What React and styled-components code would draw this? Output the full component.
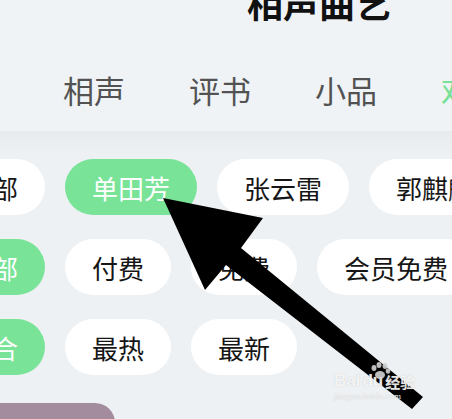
import React from "react";
import styled, { createGlobalStyle } from "styled-components";

const GlobalStyle = createGlobalStyle`
	html, body {
		margin: 0;
		padding: 0;
		background: #eef1f4;
		overflow: hidden;
	}
	body {
		font-family: "Noto Sans CJK SC", "Noto Sans", sans-serif;
	}
`;

const Page = styled.div`
	position: relative;
	width: 452px;
	height: 419px;
	overflow: hidden;
`;

const Header = styled.div`
	background: #f0f3f6;
	padding-left: 247px;
	margin-top: -24px;
	height: 46px;
`;

const Title = styled.h1`
	margin: 0;
	font-size: 36px;
	font-weight: 700;
	line-height: 52px;
	color: #111;
	white-space: nowrap;
`;

const TabBar = styled.div`
	display: flex;
	gap: 64px;
	padding: 48px 0 0 63px;
	height: 109px;
	align-items: flex-start;
	background: #f0f3f6;
	white-space: nowrap;
	box-sizing: border-box;
`;

const Tab = styled.div`
	font-size: 31px;
	line-height: 40px;
	color: ${(p) => (p.$active ? "#77e196" : "#525252")};
	flex: none;
`;

const ChipArea = styled.div`
	background: linear-gradient(#e8ebee 0px, #eef1f4 22px);
	padding-top: 28px;
	display: flex;
	flex-direction: column;
	gap: 24px;
`;

const Row = styled.div`
	display: flex;
	gap: 20px;
	margin-left: ${(p) => p.$offset}px;
	white-space: nowrap;
`;

const Chip = styled.div`
	flex: none;
	height: 56px;
	border-radius: 28px;
	padding: 0 27px;
	display: flex;
	align-items: center;
	font-size: 26px;
	color: ${(p) => (p.$on ? "#fff" : "#161616")};
	background: ${(p) => (p.$on ? "#79e398" : "#fff")};
`;

const Bottom = styled.div`
	margin-top: 28px;
	margin-left: -20px;
	width: 135px;
	height: 40px;
	background: #a38c9e;
	border-radius: 20px 20px 0 0;
`;

const Arrow = styled.svg`
	position: absolute;
	left: 0;
	top: 0;
	pointer-events: none;
`;

const Watermark = styled.div`
	position: absolute;
	left: 334px;
	top: 372px;
	color: rgba(255, 255, 255, 0.85);
	text-shadow: 0 0 1px rgba(150, 150, 150, 0.6);
	font-family: "Liberation Sans", sans-serif;
	line-height: 1;
	pointer-events: none;
`;

const Brand = styled.div`
	position: relative;
	font-size: 17px;
	font-weight: 700;
	display: flex;
	align-items: flex-end;
	gap: 2px;
`;

const Han = styled.span`
	font-family: "Noto Sans CJK SC", sans-serif;
	font-size: 15px;
`;

const Paw = styled.svg`
	position: absolute;
	left: 36px;
	top: -10px;
`;

const Url = styled.div`
	font-size: 9px;
	margin-top: 3px;
	font-family: "Liberation Serif", serif;
`;

const tabs = ["相声", "评书", "小品", "戏曲"];

const rows = [
	{ offset: -61, items: ["全部", "单田芳", "张云雷", "郭麒麟"], on: 1 },
	{ offset: -61, items: ["全部", "付费", "免费", "会员免费"], on: 0 },
	{ offset: -61, items: ["综合", "最热", "最新"], on: 0 },
];

export default function App() {
	return (
		<Page>
			<GlobalStyle />
			<Header>
				<Title>相声曲艺</Title>
			</Header>
			<TabBar>
				{tabs.map((t, i) => (
					<Tab key={t} $active={i === 3}>
						{t}
					</Tab>
				))}
			</TabBar>
			<ChipArea>
				{rows.map((r, ri) => (
					<Row key={ri} $offset={r.offset}>
						{r.items.map((c, i) => (
							<Chip key={c + i} $on={i === r.on}>
								{c}
							</Chip>
						))}
					</Row>
				))}
			</ChipArea>
			<Bottom />
			<Arrow width="452" height="419" viewBox="0 0 452 419">
				<polygon
					points="163,198 263,218 241,248 423,397 412,409 226,265 205,290"
					fill="#000"
				/>
			</Arrow>
			<Watermark>
				<Brand>
					<Paw width="22" height="18" viewBox="0 0 22 18">
						<g fill="rgba(210,210,210,0.9)">
							<ellipse cx="4" cy="6" rx="2.5" ry="3" />
							<ellipse cx="9" cy="3" rx="2.5" ry="3" />
							<ellipse cx="15" cy="4" rx="2.5" ry="3" />
							<ellipse cx="18" cy="9" rx="2.3" ry="2.8" />
							<ellipse cx="10" cy="13" rx="5" ry="4" />
						</g>
					</Paw>
					Bai<span>du</span>
					<Han>经验</Han>
				</Brand>
				<Url>jingyan.baidu.com</Url>
			</Watermark>
		</Page>
	);
}
